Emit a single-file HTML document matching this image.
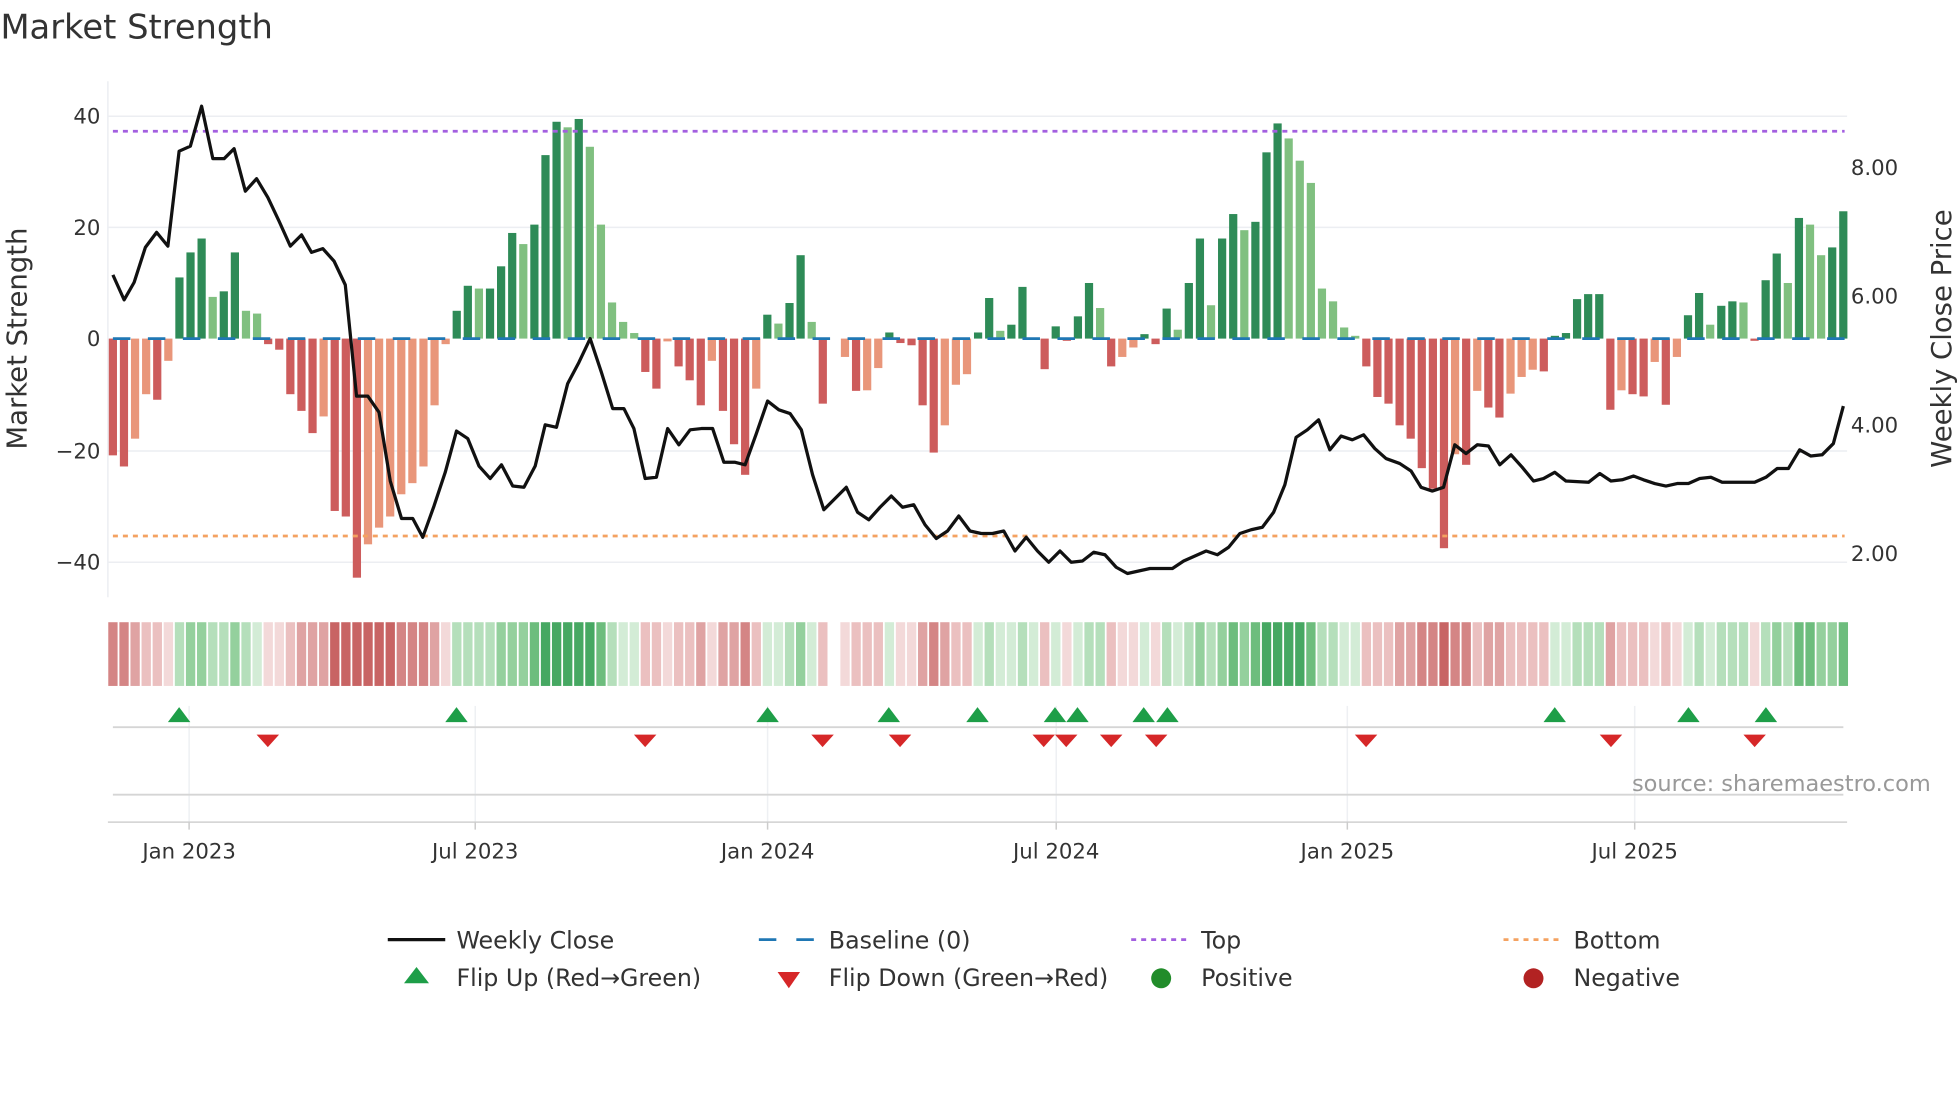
<!DOCTYPE html>
<html><head><meta charset="utf-8"><style>
html,body{margin:0;padding:0;background:#fff;width:1960px;height:1102px;overflow:hidden}
svg{display:block}
text{font-family:"DejaVu Sans","Liberation Sans",sans-serif;fill:#333}
.r{fill:#cd5c5c}.o{fill:#e9967a}.d{fill:#2e8b57}.l{fill:#80c080}
.g1{fill:#d3ecd6}.g2{fill:#b5dfbb}.g3{fill:#94d09d}.g4{fill:#6dbd7d}.g5{fill:#46a862}
.r1{fill:#f3d9d9}.r2{fill:#ebc0c0}.r3{fill:#dfa3a3}.r4{fill:#d48585}.r5{fill:#c86464}
</style></head><body>
<svg width="1960" height="1102" viewBox="0 0 1568 882" xmlns="http://www.w3.org/2000/svg">
<text x="0" y="31" font-size="27">Market Strength</text>
<g stroke="#eceef2" stroke-width="1.2">
<line x1="86" y1="93" x2="1478" y2="93"/><line x1="86" y1="182" x2="1478" y2="182"/>
<line x1="86" y1="361" x2="1478" y2="361"/><line x1="86" y1="450" x2="1478" y2="450"/>
<line x1="86" y1="65" x2="86" y2="478"/>
</g>
<g font-size="17" text-anchor="end">
<text x="80" y="99">40</text><text x="80" y="188">20</text><text x="80" y="277">0</text>
<text x="80" y="367">−20</text><text x="80" y="456">−40</text>
</g>
<g font-size="17">
<text x="1481" y="140">8.00</text><text x="1481" y="243">6.00</text>
<text x="1481" y="346">4.00</text><text x="1481" y="449">2.00</text>
</g>
<text transform="translate(21,271) rotate(-90)" font-size="22" text-anchor="middle">Market Strength</text>
<text transform="translate(1561,271) rotate(-90)" font-size="22" text-anchor="middle">Weekly Close Price</text>
<!-- positive bars -->
<g transform="translate(86.7,271) scale(8.878,-4.45)">
<rect x="6" width=".74" height="11" class="d"/><rect x="7" width=".74" height="15.5" class="d"/><rect x="8" width=".74" height="18" class="d"/><rect x="9" width=".74" height="7.5" class="l"/><rect x="10" width=".74" height="8.5" class="d"/><rect x="11" width=".74" height="15.5" class="d"/><rect x="12" width=".74" height="5" class="l"/><rect x="13" width=".74" height="4.5" class="l"/>
<rect x="31" width=".74" height="5" class="d"/><rect x="32" width=".74" height="9.5" class="d"/><rect x="33" width=".74" height="9" class="l"/><rect x="34" width=".74" height="9" class="d"/><rect x="35" width=".74" height="13" class="d"/><rect x="36" width=".74" height="19" class="d"/><rect x="37" width=".74" height="17" class="l"/><rect x="38" width=".74" height="20.5" class="d"/><rect x="39" width=".74" height="33" class="d"/><rect x="40" width=".74" height="39" class="d"/><rect x="41" width=".74" height="38" class="l"/><rect x="42" width=".74" height="39.5" class="d"/><rect x="43" width=".74" height="34.5" class="l"/><rect x="44" width=".74" height="20.5" class="l"/><rect x="45" width=".74" height="6.5" class="l"/><rect x="46" width=".74" height="3" class="l"/><rect x="47" width=".74" height="1" class="l"/>
<rect x="59" width=".74" height="4.3" class="d"/><rect x="60" width=".74" height="2.7" class="l"/><rect x="61" width=".74" height="6.4" class="d"/><rect x="62" width=".74" height="15" class="d"/><rect x="63" width=".74" height="3" class="l"/>
<rect x="70" width=".74" height="1.1" class="d"/><rect x="78" width=".74" height="1.1" class="d"/><rect x="79" width=".74" height="7.3" class="d"/><rect x="80" width=".74" height="1.4" class="l"/><rect x="81" width=".74" height="2.5" class="d"/><rect x="82" width=".74" height="9.3" class="d"/>
<rect x="85" width=".74" height="2.2" class="d"/><rect x="87" width=".74" height="4" class="d"/><rect x="88" width=".74" height="10" class="d"/><rect x="89" width=".74" height="5.5" class="l"/><rect x="93" width=".74" height=".8" class="d"/><rect x="95" width=".74" height="5.4" class="d"/><rect x="96" width=".74" height="1.6" class="l"/>
<rect x="97" width=".74" height="10" class="d"/><rect x="98" width=".74" height="18" class="d"/><rect x="99" width=".74" height="6" class="l"/><rect x="100" width=".74" height="18" class="d"/><rect x="101" width=".74" height="22.4" class="d"/><rect x="102" width=".74" height="19.5" class="l"/><rect x="103" width=".74" height="21" class="d"/><rect x="104" width=".74" height="33.5" class="d"/><rect x="105" width=".74" height="38.7" class="d"/><rect x="106" width=".74" height="36" class="l"/><rect x="107" width=".74" height="32" class="l"/><rect x="108" width=".74" height="28" class="l"/><rect x="109" width=".74" height="9" class="l"/><rect x="110" width=".74" height="6.7" class="l"/><rect x="111" width=".74" height="2" class="l"/><rect x="112" width=".74" height=".5" class="l"/>
<rect x="130" width=".74" height=".5" class="d"/><rect x="131" width=".74" height="1" class="d"/><rect x="132" width=".74" height="7.1" class="d"/><rect x="133" width=".74" height="8" class="d"/><rect x="134" width=".74" height="8" class="d"/>
<rect x="142" width=".74" height="4.2" class="d"/><rect x="143" width=".74" height="8.2" class="d"/><rect x="144" width=".74" height="2.5" class="l"/><rect x="145" width=".74" height="5.9" class="d"/><rect x="146" width=".74" height="6.7" class="d"/><rect x="147" width=".74" height="6.5" class="l"/>
<rect x="149" width=".74" height="10.5" class="d"/><rect x="150" width=".74" height="15.3" class="d"/><rect x="151" width=".74" height="10" class="l"/><rect x="152" width=".74" height="21.7" class="d"/><rect x="153" width=".74" height="20.5" class="l"/><rect x="154" width=".74" height="15" class="l"/><rect x="155" width=".74" height="16.4" class="d"/><rect x="156" width=".74" height="22.9" class="d"/>
</g>
<!-- negative bars -->
<g transform="translate(86.7,271) scale(8.878,4.45)">
<rect x="0" width=".74" height="21" class="r"/><rect x="1" width=".74" height="23" class="r"/><rect x="2" width=".74" height="18" class="o"/><rect x="3" width=".74" height="10" class="o"/><rect x="4" width=".74" height="11" class="r"/><rect x="5" width=".74" height="4" class="o"/>
<rect x="14" width=".74" height="1" class="r"/><rect x="15" width=".74" height="2" class="r"/><rect x="16" width=".74" height="10" class="r"/><rect x="17" width=".74" height="13" class="r"/><rect x="18" width=".74" height="17" class="r"/><rect x="19" width=".74" height="14" class="o"/><rect x="20" width=".74" height="31" class="r"/><rect x="21" width=".74" height="32" class="r"/><rect x="22" width=".74" height="43" class="r"/><rect x="23" width=".74" height="37" class="o"/><rect x="24" width=".74" height="34" class="o"/><rect x="25" width=".74" height="32" class="o"/><rect x="26" width=".74" height="28" class="o"/><rect x="27" width=".74" height="26" class="o"/><rect x="28" width=".74" height="23" class="o"/><rect x="29" width=".74" height="12" class="o"/><rect x="30" width=".74" height="1" class="o"/>
<rect x="48" width=".74" height="6" class="r"/><rect x="49" width=".74" height="9" class="r"/><rect x="50" width=".74" height=".5" class="o"/><rect x="51" width=".74" height="5" class="r"/><rect x="52" width=".74" height="7.5" class="r"/><rect x="53" width=".74" height="12" class="r"/><rect x="54" width=".74" height="4" class="o"/><rect x="55" width=".74" height="13" class="r"/><rect x="56" width=".74" height="19" class="r"/><rect x="57" width=".74" height="24.5" class="r"/><rect x="58" width=".74" height="9" class="o"/>
<rect x="64" width=".74" height="11.7" class="r"/><rect x="66" width=".74" height="3.3" class="o"/><rect x="67" width=".74" height="9.4" class="r"/><rect x="68" width=".74" height="9.3" class="o"/><rect x="69" width=".74" height="5.3" class="o"/><rect x="71" width=".74" height=".8" class="r"/><rect x="72" width=".74" height="1.2" class="r"/><rect x="73" width=".74" height="12" class="r"/><rect x="74" width=".74" height="20.5" class="r"/><rect x="75" width=".74" height="15.6" class="o"/><rect x="76" width=".74" height="8.3" class="o"/><rect x="77" width=".74" height="6.4" class="o"/>
<rect x="84" width=".74" height="5.5" class="r"/><rect x="86" width=".74" height=".4" class="r"/><rect x="90" width=".74" height="5" class="r"/><rect x="91" width=".74" height="3.3" class="o"/><rect x="92" width=".74" height="1.6" class="o"/><rect x="94" width=".74" height="1" class="r"/>
<rect x="113" width=".74" height="5" class="r"/><rect x="114" width=".74" height="10.5" class="r"/><rect x="115" width=".74" height="11.7" class="r"/><rect x="116" width=".74" height="15.6" class="r"/><rect x="117" width=".74" height="18" class="r"/><rect x="118" width=".74" height="23.3" class="r"/><rect x="119" width=".74" height="27" class="r"/><rect x="120" width=".74" height="37.7" class="r"/><rect x="121" width=".74" height="20.8" class="o"/><rect x="122" width=".74" height="22.7" class="r"/><rect x="123" width=".74" height="9.4" class="o"/><rect x="124" width=".74" height="12.4" class="r"/><rect x="125" width=".74" height="14.2" class="r"/><rect x="126" width=".74" height="9.9" class="o"/><rect x="127" width=".74" height="6.9" class="o"/><rect x="128" width=".74" height="5.6" class="o"/><rect x="129" width=".74" height="5.9" class="r"/>
<rect x="135" width=".74" height="12.8" class="r"/><rect x="136" width=".74" height="9.3" class="o"/><rect x="137" width=".74" height="10" class="r"/><rect x="138" width=".74" height="10.4" class="r"/><rect x="139" width=".74" height="4.2" class="o"/><rect x="140" width=".74" height="11.9" class="r"/><rect x="141" width=".74" height="3.3" class="o"/><rect x="148" width=".74" height=".4" class="r"/>
</g>
<line x1="90" y1="271" x2="1476" y2="271" stroke="#1f77b4" stroke-width="2.2" stroke-dasharray="14,14"/>
<line x1="90" y1="105" x2="1476" y2="105" stroke="#a35fe0" stroke-width="2.2" stroke-dasharray="4,4"/>
<line x1="90" y1="429" x2="1476" y2="429" stroke="#f4a261" stroke-width="2.2" stroke-dasharray="4,4"/>
<polyline fill="none" stroke="#111" stroke-width="2.6" stroke-linejoin="round" points="90,220 99,240 107,226 116,198 125,186 134,197 143,121 152,117 161,85 170,127 179,127 187,119 196,153 205,143 214,158 223,177 232,197 241,188 249,202 258,199 267,209 276,228 285,317 294,317 303,330 312,385 321,415 330,415 338,430 347,405 356,378 365,345 374,351 383,373 392,383 401,372 410,389 419,390 428,373 436,340 445,342 454,307 463,290 472,271 481,298 490,327 499,327 507,343 516,383 525,382 534,343 543,356 552,344 561,343 570,343 579,370 588,370 596,372 605,347 614,321 623,328 632,331 641,344 650,380 659,408 668,399 677,390 686,410 695,416 704,406 713,397 722,406 731,404 740,420 749,431 758,425 767,413 776,425 785,427 794,427 803,425 812,441 821,430 830,441 839,450 848,441 857,450 866,449 875,442 884,444 893,454 902,459 911,457 920,455 929,455 938,455 947,449 956,445 965,441 974,444 983,438 992,427 1001,424 1010,422 1019,410 1028,388 1037,350 1046,344 1055,336 1064,360 1073,349 1082,352 1091,348 1100,359 1109,367 1120,371 1129,377 1137,390 1146,393 1155,390 1164,356 1173,363 1182,356 1191,357 1200,372 1209,364 1218,374 1227,385 1235,383 1244,378 1253,385 1271,386 1280,379 1289,385 1298,384 1307,381 1315,384 1324,387 1333,389 1342,387 1351,387 1360,383 1369,382 1378,386 1404,386 1413,382 1422,375 1431,375 1440,360 1449,365 1458,364 1467,355 1475,325"/>
<!-- heatmap -->
<g transform="translate(86.3,498) scale(8.878,1)">
<rect x="0" width=".84" height="51" class="r4"/><rect x="1" width=".84" height="51" class="r4"/><rect x="2" width=".84" height="51" class="r3"/><rect x="3" width=".84" height="51" class="r2"/><rect x="4" width=".84" height="51" class="r2"/><rect x="5" width=".84" height="51" class="r1"/>
<rect x="6" width=".84" height="51" class="g2"/><rect x="7" width=".84" height="51" class="g3"/><rect x="8" width=".84" height="51" class="g3"/><rect x="9" width=".84" height="51" class="g2"/><rect x="10" width=".84" height="51" class="g2"/><rect x="11" width=".84" height="51" class="g3"/><rect x="12" width=".84" height="51" class="g2"/><rect x="13" width=".84" height="51" class="g1"/>
<rect x="14" width=".84" height="51" class="r1"/><rect x="15" width=".84" height="51" class="r1"/><rect x="16" width=".84" height="51" class="r2"/><rect x="17" width=".84" height="51" class="r3"/><rect x="18" width=".84" height="51" class="r3"/><rect x="19" width=".84" height="51" class="r3"/><rect x="20" width=".84" height="51" class="r5"/><rect x="21" width=".84" height="51" class="r5"/><rect x="22" width=".84" height="51" class="r5"/><rect x="23" width=".84" height="51" class="r5"/><rect x="24" width=".84" height="51" class="r5"/><rect x="25" width=".84" height="51" class="r5"/><rect x="26" width=".84" height="51" class="r4"/><rect x="27" width=".84" height="51" class="r4"/><rect x="28" width=".84" height="51" class="r4"/><rect x="29" width=".84" height="51" class="r3"/><rect x="30" width=".84" height="51" class="r1"/>
<rect x="31" width=".84" height="51" class="g2"/><rect x="32" width=".84" height="51" class="g2"/><rect x="33" width=".84" height="51" class="g2"/><rect x="34" width=".84" height="51" class="g2"/><rect x="35" width=".84" height="51" class="g3"/><rect x="36" width=".84" height="51" class="g3"/><rect x="37" width=".84" height="51" class="g3"/><rect x="38" width=".84" height="51" class="g4"/><rect x="39" width=".84" height="51" class="g5"/><rect x="40" width=".84" height="51" class="g5"/><rect x="41" width=".84" height="51" class="g5"/><rect x="42" width=".84" height="51" class="g5"/><rect x="43" width=".84" height="51" class="g5"/><rect x="44" width=".84" height="51" class="g4"/><rect x="45" width=".84" height="51" class="g2"/><rect x="46" width=".84" height="51" class="g1"/><rect x="47" width=".84" height="51" class="g1"/>
<rect x="48" width=".84" height="51" class="r2"/><rect x="49" width=".84" height="51" class="r2"/><rect x="50" width=".84" height="51" class="r1"/><rect x="51" width=".84" height="51" class="r2"/><rect x="52" width=".84" height="51" class="r2"/><rect x="53" width=".84" height="51" class="r3"/><rect x="54" width=".84" height="51" class="r1"/><rect x="55" width=".84" height="51" class="r3"/><rect x="56" width=".84" height="51" class="r3"/><rect x="57" width=".84" height="51" class="r4"/><rect x="58" width=".84" height="51" class="r2"/>
<rect x="59" width=".84" height="51" class="g1"/><rect x="60" width=".84" height="51" class="g1"/><rect x="61" width=".84" height="51" class="g2"/><rect x="62" width=".84" height="51" class="g3"/><rect x="63" width=".84" height="51" class="g1"/><rect x="64" width=".84" height="51" class="r2"/>
<rect x="66" width=".84" height="51" class="r1"/><rect x="67" width=".84" height="51" class="r2"/><rect x="68" width=".84" height="51" class="r2"/><rect x="69" width=".84" height="51" class="r2"/><rect x="70" width=".84" height="51" class="g1"/><rect x="71" width=".84" height="51" class="r1"/><rect x="72" width=".84" height="51" class="r1"/><rect x="73" width=".84" height="51" class="r3"/><rect x="74" width=".84" height="51" class="r4"/><rect x="75" width=".84" height="51" class="r3"/><rect x="76" width=".84" height="51" class="r2"/><rect x="77" width=".84" height="51" class="r2"/>
<rect x="78" width=".84" height="51" class="g1"/><rect x="79" width=".84" height="51" class="g2"/><rect x="80" width=".84" height="51" class="g1"/><rect x="81" width=".84" height="51" class="g1"/><rect x="82" width=".84" height="51" class="g2"/><rect x="83" width=".84" height="51" class="g1"/><rect x="84" width=".84" height="51" class="r2"/><rect x="85" width=".84" height="51" class="g1"/><rect x="86" width=".84" height="51" class="r1"/><rect x="87" width=".84" height="51" class="g1"/><rect x="88" width=".84" height="51" class="g2"/><rect x="89" width=".84" height="51" class="g2"/>
<rect x="90" width=".84" height="51" class="r2"/><rect x="91" width=".84" height="51" class="r1"/><rect x="92" width=".84" height="51" class="r1"/><rect x="93" width=".84" height="51" class="g1"/><rect x="94" width=".84" height="51" class="r1"/>
<rect x="95" width=".84" height="51" class="g2"/><rect x="96" width=".84" height="51" class="g1"/><rect x="97" width=".84" height="51" class="g2"/><rect x="98" width=".84" height="51" class="g3"/><rect x="99" width=".84" height="51" class="g2"/><rect x="100" width=".84" height="51" class="g3"/><rect x="101" width=".84" height="51" class="g4"/><rect x="102" width=".84" height="51" class="g3"/><rect x="103" width=".84" height="51" class="g4"/><rect x="104" width=".84" height="51" class="g5"/><rect x="105" width=".84" height="51" class="g5"/><rect x="106" width=".84" height="51" class="g5"/><rect x="107" width=".84" height="51" class="g5"/><rect x="108" width=".84" height="51" class="g4"/><rect x="109" width=".84" height="51" class="g2"/><rect x="110" width=".84" height="51" class="g2"/><rect x="111" width=".84" height="51" class="g1"/><rect x="112" width=".84" height="51" class="g1"/>
<rect x="113" width=".84" height="51" class="r2"/><rect x="114" width=".84" height="51" class="r2"/><rect x="115" width=".84" height="51" class="r2"/><rect x="116" width=".84" height="51" class="r3"/><rect x="117" width=".84" height="51" class="r3"/><rect x="118" width=".84" height="51" class="r4"/><rect x="119" width=".84" height="51" class="r4"/><rect x="120" width=".84" height="51" class="r5"/><rect x="121" width=".84" height="51" class="r4"/><rect x="122" width=".84" height="51" class="r4"/><rect x="123" width=".84" height="51" class="r2"/><rect x="124" width=".84" height="51" class="r3"/><rect x="125" width=".84" height="51" class="r3"/><rect x="126" width=".84" height="51" class="r2"/><rect x="127" width=".84" height="51" class="r2"/><rect x="128" width=".84" height="51" class="r2"/><rect x="129" width=".84" height="51" class="r2"/>
<rect x="130" width=".84" height="51" class="g1"/><rect x="131" width=".84" height="51" class="g1"/><rect x="132" width=".84" height="51" class="g2"/><rect x="133" width=".84" height="51" class="g2"/><rect x="134" width=".84" height="51" class="g2"/>
<rect x="135" width=".84" height="51" class="r3"/><rect x="136" width=".84" height="51" class="r2"/><rect x="137" width=".84" height="51" class="r2"/><rect x="138" width=".84" height="51" class="r2"/><rect x="139" width=".84" height="51" class="r1"/><rect x="140" width=".84" height="51" class="r2"/><rect x="141" width=".84" height="51" class="r1"/>
<rect x="142" width=".84" height="51" class="g1"/><rect x="143" width=".84" height="51" class="g2"/><rect x="144" width=".84" height="51" class="g1"/><rect x="145" width=".84" height="51" class="g2"/><rect x="146" width=".84" height="51" class="g2"/><rect x="147" width=".84" height="51" class="g2"/><rect x="148" width=".84" height="51" class="r1"/>
<rect x="149" width=".84" height="51" class="g2"/><rect x="150" width=".84" height="51" class="g3"/><rect x="151" width=".84" height="51" class="g2"/><rect x="152" width=".84" height="51" class="g4"/><rect x="153" width=".84" height="51" class="g4"/><rect x="154" width=".84" height="51" class="g3"/><rect x="155" width=".84" height="51" class="g3"/><rect x="156" width=".84" height="51" class="g4"/>
</g>
<!-- lower panel -->
<g stroke="#eef0f3" stroke-width="1.2">
<line x1="151" y1="565" x2="151" y2="658"/><line x1="380" y1="565" x2="380" y2="658"/>
<line x1="614" y1="565" x2="614" y2="658"/><line x1="845" y1="565" x2="845" y2="658"/>
<line x1="1078" y1="565" x2="1078" y2="658"/><line x1="1308" y1="565" x2="1308" y2="658"/>
</g>
<line x1="90" y1="582" x2="1475" y2="582" stroke="#d5d5d5" stroke-width="1.5"/>
<line x1="90" y1="636" x2="1475" y2="636" stroke="#d5d5d5" stroke-width="1.5"/>
<line x1="86" y1="658" x2="1478" y2="658" stroke="#d0d0d0" stroke-width="1.2"/>
<g stroke="#ccc" stroke-width="1.2">
<line x1="151" y1="658" x2="151" y2="664"/><line x1="380" y1="658" x2="380" y2="664"/>
<line x1="614" y1="658" x2="614" y2="664"/><line x1="845" y1="658" x2="845" y2="664"/>
<line x1="1078" y1="658" x2="1078" y2="664"/><line x1="1308" y1="658" x2="1308" y2="664"/>
</g>
<g fill="#1e9e48">
<polygon points="143,566 152,578 134,578"/><polygon points="365,566 374,578 356,578"/><polygon points="614,566 623,578 605,578"/><polygon points="711,566 720,578 702,578"/><polygon points="782,566 791,578 773,578"/><polygon points="844,566 853,578 835,578"/><polygon points="862,566 871,578 853,578"/><polygon points="915,566 924,578 906,578"/><polygon points="934,566 943,578 925,578"/><polygon points="1244,566 1253,578 1235,578"/><polygon points="1351,566 1360,578 1342,578"/><polygon points="1413,566 1422,578 1404,578"/>
</g>
<g fill="#d62728">
<polygon points="205,588 223,588 214,598"/><polygon points="507,588 525,588 516,598"/><polygon points="649,588 667,588 658,598"/><polygon points="711,588 729,588 720,598"/><polygon points="826,588 844,588 835,598"/><polygon points="844,588 862,588 853,598"/><polygon points="880,588 898,588 889,598"/><polygon points="916,588 934,588 925,598"/><polygon points="1084,588 1102,588 1093,598"/><polygon points="1280,588 1298,588 1289,598"/><polygon points="1395,588 1413,588 1404,598"/>
</g>
<text x="1545" y="633" font-size="18" text-anchor="end" style="fill:#999">source: sharemaestro.com</text>
<g font-size="17" text-anchor="middle">
<text x="151" y="687">Jan 2023</text><text x="380" y="687">Jul 2023</text>
<text x="614" y="687">Jan 2024</text><text x="845" y="687">Jul 2024</text>
<text x="1078" y="687">Jan 2025</text><text x="1308" y="687">Jul 2025</text>
</g>
<line x1="310" y1="752" x2="356" y2="752" stroke="#111" stroke-width="2.6"/>
<line x1="607" y1="752" x2="651" y2="752" stroke="#1f77b4" stroke-width="2.2" stroke-dasharray="14,16"/>
<line x1="905" y1="752" x2="949" y2="752" stroke="#a35fe0" stroke-width="2.2" stroke-dasharray="4,4"/>
<line x1="1203" y1="752" x2="1247" y2="752" stroke="#f4a261" stroke-width="2.2" stroke-dasharray="4,4"/>
<polygon points="333,774 343,787 323,787" fill="#1e9e48"/>
<polygon points="622,778 640,778 631,791" fill="#d62728"/>
<circle cx="929" cy="783" r="8" fill="#218c2a"/>
<circle cx="1227" cy="783" r="8" fill="#b22222"/>
<g font-size="19">
<text x="365" y="759">Weekly Close</text><text x="663" y="759">Baseline (0)</text>
<text x="961" y="759">Top</text><text x="1259" y="759">Bottom</text>
<text x="365" y="789">Flip Up (Red→Green)</text><text x="663" y="789">Flip Down (Green→Red)</text>
<text x="961" y="789">Positive</text><text x="1259" y="789">Negative</text>
</g>
</svg>
</body></html>
